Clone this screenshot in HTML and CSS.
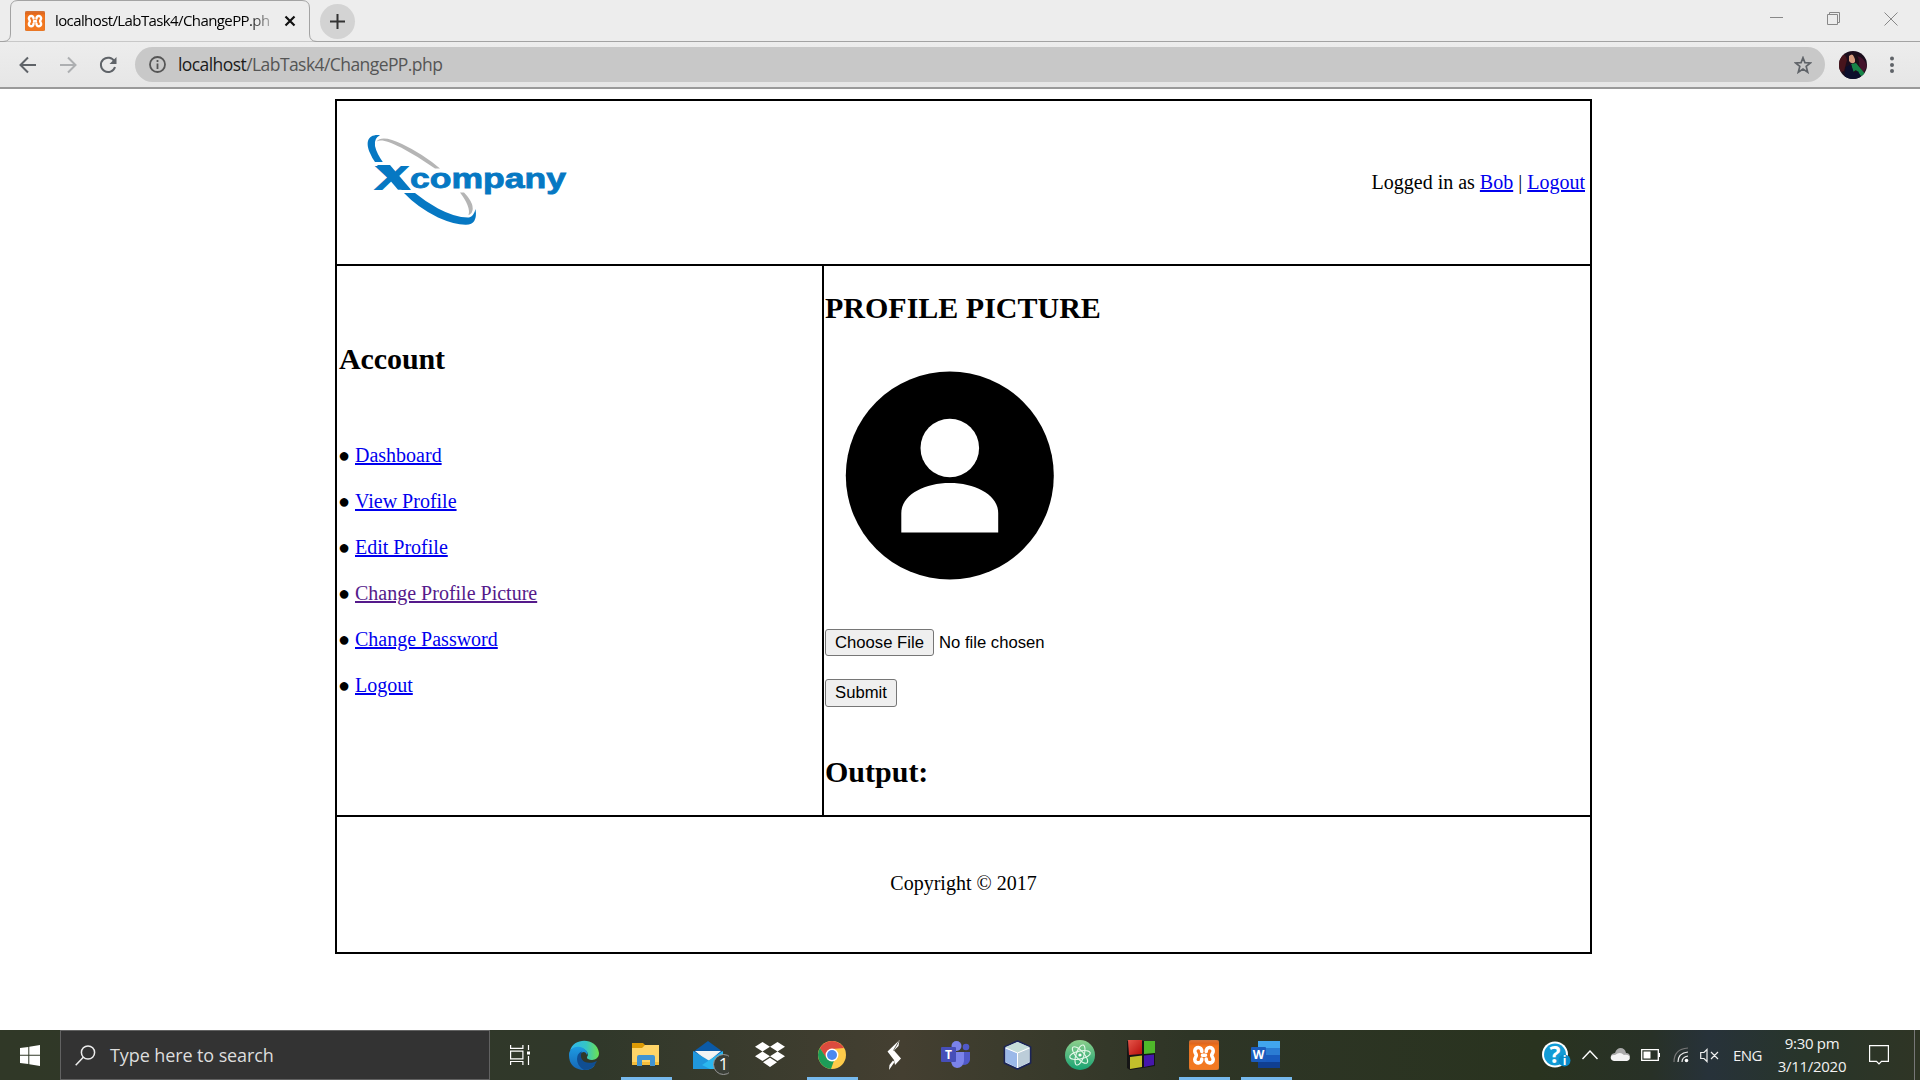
FILE: index.html
```html
<!DOCTYPE html>
<html lang="en">
<head>
<meta charset="utf-8">
<title>localhost/LabTask4/ChangePP.php</title>
<link rel="stylesheet" href="styles.css">
</head>
<body>
<svg width="0" height="0" class="defs">
  <defs>
    <linearGradient id="orange" x1="0" y1="0" x2="0" y2="1"><stop offset="0" stop-color="#d9763a"/><stop offset=".12" stop-color="#e0661c"/><stop offset=".2" stop-color="#f2741c"/><stop offset="1" stop-color="#f37a22"/></linearGradient>
    <symbol id="xampp" viewBox="0 0 30 30">
      <rect width="30" height="30" rx="2.500" fill="url(#orange)" stroke="#b8713f" stroke-width=".5"/>
      <path d="M12.800 11.500C13 6.200 5.800 6.500 5.800 11C5.800 13 7.300 13.800 7.300 15.300C7.300 16.800 5.800 17.500 5.800 19.500C5.800 24 13 24.200 12.800 19M17.200 11.500C17 6.200 24.200 6.500 24.200 11C24.200 13 22.700 13.800 22.700 15.300C22.700 16.800 24.200 17.500 24.200 19.500C24.200 24 17 24.200 17.200 19M13.500 15.300H16.500" fill="none" stroke="#fff" stroke-width="3.600" stroke-linecap="round" stroke-linejoin="round"/>
    </symbol>
  </defs>
</svg>
<header class="browser">
  <div class="tabstrip">
    <svg class="tab-shape" width="320" height="42"><path d="M0 41.500H3Q10.500 41.500 10.500 34V8Q10.500 .5 18 .5H302Q309.500 .5 309.500 8V34Q309.500 41.500 317 41.500H320" fill="#ededed" stroke="#a3a3a3"/></svg>
    <div class="tab">
      <svg class="favicon" width="20" height="20"><use href="#xampp"/></svg>
      <span class="tab-title">localhost/LabTask4/ChangePP.ph</span>
      <svg class="tab-close" width="12" height="12"><path d="M1.500 1.500L10.500 10.500M10.500 1.500L1.500 10.500" stroke="#111" stroke-width="2.200"/></svg>
    </div>
    <div class="new-tab"><svg width="15" height="15"><path d="M7.500 0V15M0 7.500H15" stroke="#333" stroke-width="2"/></svg></div>
    <div class="window-controls">
      <svg width="13" height="14"><path d="M0 5.500H13" stroke="#888"/></svg>
      <svg width="13" height="14"><path d="M.5 2.500H10.500V12.500H.5ZM2.500 2.500V.5H12.500V10.500H10.500" fill="none" stroke="#888"/></svg>
      <svg width="14" height="14"><path d="M.5 .5L13.500 13.500M13.500 .5L.5 13.500" stroke="#888"/></svg>
    </div>
  </div>
  <div class="toolbar">
    <svg width="17" height="18" class="back"><path d="M17 9H2M9 1.500L1.500 9L9 16.500" fill="none" stroke="#5f6368" stroke-width="2"/></svg>
    <svg width="17" height="18" class="forward"><path d="M0 9H15M8 1.500L15.500 9L8 16.500" fill="none" stroke="#adafb1" stroke-width="2"/></svg>
    <svg width="18" height="18" class="reload"><path d="M15.500 5.500A7.200 7.200 0 1 0 16 11" fill="none" stroke="#5f6368" stroke-width="2"/><path d="M17.500 1V8H10.500Z" fill="#5f6368"/></svg>
    <div class="omnibox">
      <svg width="17" height="17"><circle cx="8.500" cy="8.500" r="7.500" fill="none" stroke="#555" stroke-width="1.800"/><path d="M8.500 7.500V13M8.500 4V6" stroke="#555" stroke-width="1.800"/></svg>
      <span class="url"><span class="host">localhost</span>/LabTask4/ChangePP.php</span>
      <svg width="18" height="18" viewBox="0 0 18 18"><path d="M9 1.700L10.900 6.600L16.500 6.900L12.200 10.400L13.700 16.200L9 13L4.300 16.200L5.800 10.400L1.500 6.900L7.100 6.600Z" fill="none" stroke="#5f6368" stroke-width="1.700"/></svg>
    </div>
    <svg class="avatar" width="28" height="28" viewBox="0 0 28 28">
      <defs><clipPath id="av"><circle cx="14" cy="14" r="14"/></clipPath></defs>
      <g clip-path="url(#av)"><rect width="28" height="28" fill="#1b0d1c"/><path d="M0 3Q7 2 8 9L5 20L0 22Z" fill="#47141c"/><path d="M18 5Q25 6 28 15L24 23L20 14Z" fill="#43132b"/><path d="M10 5Q13 2 16 5L16 11Q13 14 10 10Z" fill="#d49a7d"/><path d="M13 3Q20 2 20 12L17 13Q16 6 13 3Z" fill="#1d1018"/><path d="M12 13L17 12L27 24L22 25L17 19L14 21Z" fill="#168447"/><path d="M7 16L12 13L15 22L19 20L23 28H5Z" fill="#0c0e2c"/></g>
    </svg>
    <svg width="4" height="18" class="menu"><circle cx="2" cy="2.500" r="2" fill="#5f6368"/><circle cx="2" cy="9" r="2" fill="#5f6368"/><circle cx="2" cy="15" r="2" fill="#5f6368"/></svg>
  </div>
</header>

<main class="page">
  <div class="layout">
    <div class="head">
      <svg class="logo" width="240" height="163" viewBox="7 11 240 163">
        <path d="M50 45.200C37 44 35.500 53 40 63Q42 68 45 72H52.800Q46.500 63 45 56Q43.800 48 50 45.200Z" fill="#0678c3"/>
        <path d="M46.500 51.500C50 46.500 60 48 72 54Q93 64 110 78.500H105Q88 66.500 71 57.500C58 51 51 49 46.500 51.500Z" fill="#b5b5b5"/>
        <path d="M74 103H85Q96 112 108 118.500Q126 128 139 127.500Q144 126 145.500 119Q148 134.500 136 134.800Q125 135 108 127.500Q87 117 74 103Z" fill="#0678c3"/>
        <path d="M130 102.500H134Q146 115 141.500 123Q139 125.500 138.500 125Q141 117 130 102.500Z" fill="#b5b5b5"/>
        <path d="M47 75H60L81 99.700H68Z" fill="#0678c3"/>
        <text x="43" y="99.700" class="logo-x" textLength="38" lengthAdjust="spacingAndGlyphs">X</text>
        <text x="80" y="97.500" class="logo-name" textLength="156" lengthAdjust="spacingAndGlyphs">company</text>
      </svg>
      <p class="session">Logged in as <a href="#">Bob</a> | <a href="#">Logout</a></p>
    </div>
    <nav class="account">
      <h2>Account</h2>
      <ul>
        <li><a href="#">Dashboard</a></li>
        <li><a href="#">View Profile</a></li>
        <li><a href="#">Edit Profile</a></li>
        <li><a href="#" class="visited">Change Profile Picture</a></li>
        <li><a href="#">Change Password</a></li>
        <li><a href="#">Logout</a></li>
      </ul>
    </nav>
    <section class="content">
      <h2>PROFILE PICTURE</h2>
      <svg class="picture" width="250" height="250"><circle cx="124.800" cy="125.500" r="104"/><circle cx="124.800" cy="98" r="29.300" fill="#fff"/><path d="M76.300 182.500V163C76.300 145 99 133 124.800 133S173.200 145 173.200 163V182.500Z" fill="#fff"/></svg>
      <div class="file-row"><button class="choose">Choose File</button><span class="file-name">No file chosen</span></div>
      <button class="submit">Submit</button>
      <h2 class="output">Output:</h2>
    </section>
    <footer class="foot">Copyright © 2017</footer>
  </div>
</main>

<div class="taskbar">
  <div class="start"><svg width="20" height="21"><path d="M0 3L8.300 1.900V9.800H0ZM9.300 1.700L20 0V9.800H9.300ZM0 10.800H8.300V19L0 17.900ZM9.300 10.800H20V21L9.300 19.300Z" fill="#fff"/></svg></div>
  <div class="search">
    <svg width="21" height="21"><circle cx="13" cy="7.500" r="6.600" fill="none" stroke="#eee" stroke-width="1.500"/><path d="M8.300 12.200L.7 20.300" stroke="#eee" stroke-width="1.500"/></svg>
    <span class="search-text">Type here to search</span>
  </div>
  <div class="task-view"><svg width="21" height="20"><path d="M.6 0V3.400H12.900V0M.6 20V16.500H12.900V20M.6 6.100H12.900V13.900H.6ZM18.500 0V5M18.500 11V20" fill="none" stroke="#fff" stroke-width="1.200"/><rect x="17" y="6.500" width="3" height="3" fill="#fff"/></svg></div>
  <div class="apps">
    <div class="app"><svg width="30" height="30" viewBox="0 0 30 30">
      <defs><linearGradient id="e1"><stop offset="0" stop-color="#2fb5ee"/><stop offset=".55" stop-color="#35c5c5"/><stop offset="1" stop-color="#6de250"/></linearGradient><linearGradient id="e2" x1="0" y1="0" x2="0" y2="1"><stop offset="0" stop-color="#1d9be2"/><stop offset="1" stop-color="#1667b7"/></linearGradient></defs>
      <path d="M1 11C4-3 28-3 30 13C30 20 23 21 19 19Q17 18 19 15C19 8 6 5 1 11Z" fill="url(#e1)"/>
      <path d="M0 15C0 8 8 5 14 8Q20 12 18 15C16 9 10 13 10 18C10 25 18 29 26 25C22 31 15 30 13 30Q0 28 0 15Z" fill="url(#e2)"/>
      <path d="M8 19Q8 13 13 11.500C9 20 17 26 28 21Q24 30 15 30Q8 26 8 19Z" fill="#104e92"/></svg></div>
    <div class="app open"><svg width="30" height="30" viewBox="0 0 30 30"><path d="M1 3H12L14 5V9H1Z" fill="#dd9b05"/><path d="M1 8H11L14 5H28V25H1Z" fill="#ffd568"/><path d="M1 22H28V25H1Z" fill="#f5be3b"/><path d="M6 26V17Q6 15 8 15H22Q24 15 24 17V26H19V20H11V26Z" fill="#4194d2"/></svg></div>
    <div class="app"><svg width="42" height="36" viewBox="0 0 42 36" class="mail"><path d="M6 12L21 1L36 12V18H6Z" fill="#0b5aa7"/><path d="M8 11H34L21 22Z" fill="#eee"/><path d="M6 11L36 29H6Z" fill="#2097dd"/><path d="M36 11V29H23L15 25Z" fill="#2bb7ef"/><path d="M9 11H33L21 19.500Z" fill="#f4f4f4"/><circle cx="36.500" cy="24.500" r="10" fill="#3a3e36" stroke="#999"/><text x="36.500" y="30" class="badge">1</text></svg></div>
    <div class="app"><svg width="30" height="30" viewBox="0 0 30 30"><path d="M7.500 2L15 6.800L7.500 11.500L0 6.800ZM22.500 2L30 6.800L22.500 11.500L15 6.800ZM7.500 11.500L15 16.300L7.500 21L0 16.300ZM22.500 11.500L30 16.300L22.500 21L15 16.300ZM15 17.700L22 22.200L15 27L8 22.200Z" fill="#fff"/></svg></div>
    <div class="app open"><svg width="30" height="30" viewBox="0 0 30 30"><circle cx="15" cy="15" r="14" fill="#fdcb4a"/><path d="M2.900 8A14 14 0 0 1 27.100 8L15 9V15L9 18Z" fill="#dc4b3e"/><path d="M2.900 8L9.600 18.200L17 20.500L14 29A14 14 0 0 1 2.900 8Z" fill="#1d9d58"/><circle cx="15" cy="15" r="6.400" fill="#fff"/><circle cx="15" cy="15" r="5" fill="#4a89f0"/></svg></div>
    <div class="app"><svg width="30" height="30" viewBox="0 0 30 30"><path d="M20.500 0L19.500 6L15 10.500L22 18.500L16 25L15 20L8.500 11.500Z" fill="#fff"/><path d="M15.500 22L10 30L10.500 25L14 20.500Z" fill="#fff"/><path d="M20 1L14.500 10.500" stroke="#403d31" stroke-width=".8"/></svg></div>
    <div class="app"><svg width="30" height="30" viewBox="0 0 30 30"><circle cx="15.500" cy="6" r="5" fill="#7b83eb"/><circle cx="25" cy="7" r="3.300" fill="#5059c9"/><path d="M21 12H29V20Q28 25 22 25Z" fill="#5059c9"/><path d="M10 12H23V21Q22 28 16 28Q10 27 10 20Z" fill="#7b83eb"/><rect x="0" y="7" width="15" height="15" rx="1" fill="#464eb8"/><text x="7.500" y="19" class="tile">T</text></svg></div>
    <div class="app"><svg width="30" height="30" viewBox="0 0 30 30"><path d="M14.500 1L27.500 7V23L14.500 29L1.500 23V7Z" fill="#dce8f0" stroke="#1b2458" stroke-width="1.800" stroke-linejoin="round"/><path d="M2.500 8L14.500 13V28L2.500 22Z" fill="#9bb9e9"/><path d="M14.500 13L26.500 8V22L14.500 28Z" fill="#bccdd9"/><path d="M14.500 2L26.500 7L14.500 13L2.500 7Z" fill="#c5ddda"/><path d="M2.500 8L14.500 13L26.500 8M14.500 13V28" stroke="#fff" fill="none"/></svg></div>
    <div class="app"><svg width="30" height="30" viewBox="0 0 30 30"><defs><linearGradient id="at" x1="0" y1="0" x2="0" y2="1"><stop offset="0" stop-color="#8dcf8c"/><stop offset="1" stop-color="#19a373"/></linearGradient></defs><circle cx="15" cy="15" r="15" fill="url(#at)"/><g fill="none" stroke="#e3f7e8" stroke-width="1.100"><ellipse cx="15" cy="15" rx="10.500" ry="4" transform="rotate(-12 15 15)"/><ellipse cx="15" cy="15" rx="10.500" ry="4" transform="rotate(48 15 15)"/><ellipse cx="15" cy="15" rx="10.500" ry="4" transform="rotate(108 15 15)"/></g><circle cx="15" cy="15" r="1.600" fill="#fff"/></svg></div>
    <div class="app"><svg width="30" height="30" viewBox="0 0 30 30"><defs><linearGradient id="rd" x1="0" y1="0" x2="1" y2="1"><stop offset="0" stop-color="#e5564a"/><stop offset="1" stop-color="#b80d0a"/></linearGradient></defs><path d="M0 1H28V26L3 30L0 28Z" fill="#151515"/><path d="M1 0H15V14L2 15Z" fill="url(#rd)"/><path d="M17 1H28V13L17 14Z" fill="#4fb82a"/><path d="M3 17L15 15.500V27L3 29Z" fill="#c2bf2b"/><path d="M17 15.500L27 14.500V25L17 27Z" fill="#4617ac"/></svg></div>
    <div class="app open"><svg width="30" height="30"><use href="#xampp"/></svg></div>
    <div class="app open"><svg width="30" height="30" viewBox="0 0 30 30"><path d="M7 1H29V8H7Z" fill="#41a5ee"/><path d="M7 8H29V15H7Z" fill="#2b7cd3"/><path d="M7 15H29V22H7Z" fill="#185abd"/><path d="M7 22H29V28H7Z" fill="#103f91"/><rect x="0" y="7" width="15" height="15" rx="1" fill="#1b5cbd"/><text x="7.500" y="18.500" class="tile">W</text></svg></div>
  </div>
  <div class="tray">
    <svg class="help" width="30" height="28" viewBox="0 0 30 28"><circle cx="13" cy="13.500" r="13" fill="#fff"/><circle cx="13" cy="13.500" r="11" fill="#129bd5"/><text x="13" y="21.500" class="help-q">?</text><circle cx="22.500" cy="19.500" r="6" fill="#088bc9"/><text x="22.500" y="24" class="help-i">i</text></svg>
    <svg class="chev" width="16" height="10"><path d="M.5 9L8 1L15.500 9" fill="none" stroke="#fff" stroke-width="1.400"/></svg>
    <svg class="cloud" width="21" height="14"><path d="M1 10C0 6 4 5 5 5C7-2 15-1 16 5Q20 5 20 9L15 11Z" fill="#aaa"/><path d="M4 13C-1 12 0 6 5 7Q10 3 14 7C20 5 22 12 17 13Z" fill="#f3f3f3"/></svg>
    <svg class="battery" width="20" height="12"><path d="M.7 .7H17.300V11.300H.7Z" fill="none" stroke="#fff" stroke-width="1.300"/><rect x="2.500" y="2.500" width="7" height="7" fill="#fff"/><path d="M18.500 4V8" stroke="#fff"/></svg>
    <svg class="wifi" width="16" height="16"><g fill="none" stroke-width="1.200"><path d="M1 15Q1 2 15 1" stroke="#777"/><path d="M5 15Q5 6 15 5" stroke="#eee"/><path d="M9 15Q9 10 15 9" stroke="#eee"/></g><circle cx="13.500" cy="13.500" r="1.800" fill="#fff"/></svg>
    <svg class="sound" width="19" height="15"><path d="M.7 4.500H4L7 1.500V13.500L4 10.500H.7ZM11 4L18 11M18 4L11 11" fill="none" stroke="#eee" stroke-width="1.200"/></svg>
    <span class="lang">ENG</span>
    <div class="clock"><span class="time">9:30 pm</span><span class="date">3/11/2020</span></div>
    <svg class="notes" width="21" height="21"><path d="M.6 .6H19.400V16.400H12.500L10 19L7.500 16.400H.6Z" fill="none" stroke="#fff" stroke-width="1.200"/></svg>
    <span class="peek"></span>
  </div>
</div>
</body>
</html>
```
FILE: styles.css
```css
* { box-sizing: border-box; }
body {
  margin: 0;
  width: 1920px;
  height: 1080px;
  display: flex;
  flex-direction: column;
  overflow: hidden;
  background: #fff;
  color: #000;
  font-family: "Liberation Serif", serif;
  font-size: 20px;
}
svg { display: block; flex: none; }
.defs { position: absolute; }

.browser {
  height: 89px;
  flex: none;
  background: #ededed;
  border-bottom: 2px solid #9a9a9a;
  font-family: "Open Sans", sans-serif;
}
.tabstrip {
  position: relative;
  height: 42px;
  display: flex;
  align-items: center;
  box-shadow: inset 0 -1px #a3a3a3;
}
.tab-shape { position: absolute; left: 0; top: 0; }
.tab {
  position: relative;
  width: 310px;
  height: 42px;
  padding-left: 25px;
  display: flex;
  align-items: center;
}
.tab-title {
  width: 219px;
  margin-left: 10px;
  margin-top: -2px;
  white-space: nowrap;
  font-size: 15px;
  line-height: 24px;
  letter-spacing: -0.6px;
  -webkit-mask-image: linear-gradient(90deg, #000 88%, rgba(0, 0, 0, 0.15));
  mask-image: linear-gradient(90deg, #000 88%, rgba(0, 0, 0, 0.15));
}
.tab-close { margin-left: 10px; }
.new-tab {
  width: 35px;
  height: 35px;
  margin-left: 10px;
  border-radius: 50%;
  background: #d3d3d3;
  display: flex;
  align-items: center;
  justify-content: center;
}
.window-controls {
  margin-left: auto;
  margin-right: 22px;
  margin-bottom: 5px;
  display: flex;
  gap: 44px;
}
.toolbar {
  height: 45px;
  display: flex;
  align-items: center;
  padding-left: 19px;
  background: linear-gradient(#ededed, #e6e6e6);
}
.forward { margin-left: 24px; }
.reload { margin-left: 22px; }
.omnibox {
  width: 1690px;
  height: 35px;
  margin-left: 18px;
  padding: 0 13px 0 14px;
  border-radius: 18px;
  background: #c8c8c8;
  display: flex;
  align-items: center;
}
.url {
  flex: 1;
  margin-left: 12px;
  margin-top: -1px;
  color: #555;
  font-size: 17.5px;
  line-height: 28px;
  letter-spacing: -0.57px;
}
.host { color: #1b1b1b; }
.avatar { margin-left: 14px; }
.menu { margin-left: 23px; }

.page { flex: 1; padding: 10px 0 0 335px; }
.layout {
  width: 1257px;
  height: 855px;
  display: grid;
  grid-template-columns: 485px 766px;
  grid-template-rows: 163px 549px 135px;
  gap: 2px;
  padding: 2px;
  background: #000;
}
.layout > * { background: #fff; }
.head {
  grid-column: 1 / 3;
  display: flex;
  justify-content: space-between;
  padding-right: 5px;
}
.logo-x { font: bold 35px "Liberation Sans", sans-serif; fill: #0678c3; }
.logo-name { font: bold 27px "Liberation Sans", sans-serif; fill: #0678c3; stroke: #0678c3; stroke-width: .8; }
.session { margin: 69px 0 0; line-height: 24px; }
a { color: #0000ee; text-decoration: underline; }
a.visited { color: #551a8b; }
h2 { margin: 0; font-size: 30px; line-height: 34px; }
.account { padding: 76px 0 0 2px; }
.account h2 { letter-spacing: -0.1px; }
.account ul { margin: 67px 0 0; padding: 0; list-style: none; }
.account li { height: 46px; line-height: 24px; display: flex; }
.account li::before { content: "●"; width: 17px; margin-left: -1px; flex: none; }
.content { padding: 25px 0 0 1px; display: flex; flex-direction: column; align-items: flex-start; }
.picture { margin-top: 25px; }
button {
  padding: 0;
  border: 1px solid #767676;
  border-radius: 3px;
  background: #efefef;
  color: #000;
  font: 16.67px/24px "Liberation Sans", sans-serif;
}
.file-row { display: flex; align-items: center; margin-top: 29px; }
.choose { width: 109px; height: 27px; }
.file-name { margin-left: 5px; font: 16.67px/24px "Liberation Sans", sans-serif; }
.submit { width: 72px; height: 28px; margin-top: 23px; }
.content .output { margin-top: 48px; }
.foot { grid-column: 1 / 3; padding-top: 54px; text-align: center; line-height: 24px; }

.taskbar {
  height: 50px;
  flex: none;
  display: flex;
  align-items: center;
  color: #f2f2f2;
  font-family: "Open Sans", sans-serif;
  background: linear-gradient(90deg, #303827 0, #30382a 31%, #443f31 47%, #3c3c2d 52%, #2e3526 62%, #29331f 80%, #283127 86%, #27323a 89%, #28352a 94%, #2f3525 100%);
}
.start { width: 60px; padding-left: 20px; }
.search {
  width: 430px;
  height: 50px;
  padding-left: 14px;
  display: flex;
  align-items: center;
  background: #333;
  border: 1px solid #626262;
}
.search-text { margin-left: 14px; font-size: 18px; letter-spacing: -0.1px; color: #ddd; }
.task-view { width: 63px; padding-left: 20px; }
.apps { display: flex; }
.app { width: 62px; height: 50px; display: flex; align-items: center; justify-content: center; }
.app.open { background: linear-gradient(#76b9ed, #76b9ed) 50% 100% / 51px 3px no-repeat; }
.mail { margin-top: 6px; }
.badge { font: 17px "Open Sans", sans-serif; fill: #fff; text-anchor: middle; }
.tile { font: bold 12px "Open Sans", sans-serif; fill: #fff; text-anchor: middle; }
.help-q { font: bold 23px "Open Sans", sans-serif; fill: #fff; text-anchor: middle; }
.help-i { font: bold 12px "Open Sans", sans-serif; fill: #fff; text-anchor: middle; }
.tray { flex: 1; display: flex; align-items: center; padding-left: 245px; }
.help { overflow: visible; }
.chev { margin-left: 10px; }
.cloud { margin-left: 12px; }
.battery { margin-left: 10px; }
.wifi { margin-left: 12px; }
.sound { margin-left: 11px; }
.lang { width: 30px; margin-left: 14px; font-size: 15px; letter-spacing: -0.6px; }
.clock { width: 80px; margin-left: 9px; display: flex; flex-direction: column; align-items: center; font-size: 15px; line-height: 23px; }
.time, .date { letter-spacing: -0.3px; white-space: nowrap; }
.notes { margin-left: 17px; }
.peek { width: 1px; height: 50px; margin-left: 24px; background: #777; }
```
